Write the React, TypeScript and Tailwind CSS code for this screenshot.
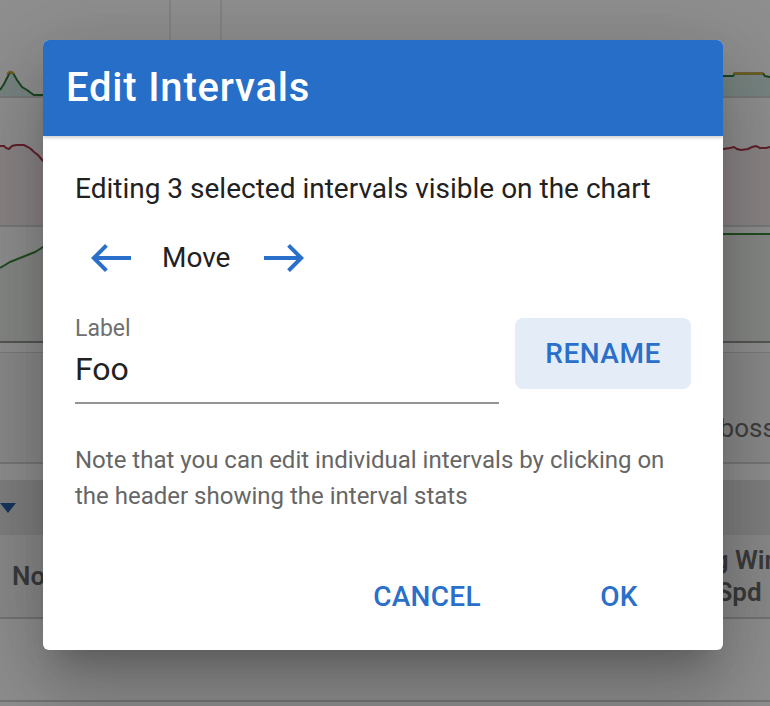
import React from 'react'

const BLUE = '#2a6fc9'

const greenTop =
  '0,90 4,84 8,76 10,72 13,73 17,80 22,87 27,90 31,93 34,95 120,95 170,94 221,95 400,95 560,94 700,93 715,84 723,76 733,76 735,73.5 763,73.5 765,76 770,77'
const redLine =
  '0,146 4,146 6,148 9,149 12,146 16,145 24,145 28,147 31,149 34,152 38,155 43,161 200,170 400,160 600,152 723,149 730,148 734,147 737,149 741,150 748,149 752,147 756,146 760,148 766,148 770,147'
const greenLow =
  '0,268 5,265 10,262 15,260 20,258 25,256 30,254 35,252 40,249 43,247 200,238 400,235 723,234 770,234'

function ArrowWest() {
  return (
    <svg width="48" height="48" viewBox="0 0 24 24" fill={BLUE}>
      <path d="M9 19l1.41-1.41L5.83 13H22v-2H5.83l4.59-4.59L9 5l-7 7 7 7z" />
    </svg>
  )
}

function ArrowEast() {
  return (
    <svg width="48" height="48" viewBox="0 0 24 24" fill={BLUE}>
      <path d="M15 5l-1.41 1.41L18.17 11H2v2h16.17l-4.59 4.59L15 19l7-7-7-7z" />
    </svg>
  )
}

function Charts() {
  return (
    <svg width="770" height="353" viewBox="0 0 770 353" className="block">
      <rect x="0" y="0" width="770" height="353" fill="#ffffff" />
      <line x1="170" y1="0" x2="170" y2="97" stroke="#e2e2e2" strokeWidth="1.5" />
      <line x1="221" y1="0" x2="221" y2="97" stroke="#e2e2e2" strokeWidth="1.5" />
      <polygon points={`${greenTop} 770,97 0,97`} fill="#c4e2dd" opacity="0.7" />
      <polyline points={greenTop} fill="none" stroke="#2f7d3c" strokeWidth="2" />
      <polyline points="7,74 10,71.5 13,72.5 14,74" fill="none" stroke="#d4a52a" strokeWidth="2" />
      <polyline points="733,73.5 763,73.5" fill="none" stroke="#d4a52a" strokeWidth="2" />
      <line x1="0" y1="97" x2="770" y2="97" stroke="#d6d6d6" strokeWidth="2" />

      <polygon points={`${redLine} 770,225 0,225`} fill="#f6eced" />
      <polyline points={redLine} fill="none" stroke="#b03a4e" strokeWidth="2" />
      <line x1="0" y1="226" x2="770" y2="226" stroke="#d8d8d8" strokeWidth="2" />

      <polygon points={`${greenLow} 770,341 0,341`} fill="#eff3ee" />
      <polyline points={greenLow} fill="none" stroke="#3e8a3e" strokeWidth="2" />
      <line x1="0" y1="342" x2="770" y2="342" stroke="#9a9a9a" strokeWidth="2" />
      <line x1="0" y1="353" x2="770" y2="353" stroke="#dcdcdc" strokeWidth="2" />
    </svg>
  )
}

function Background() {
  return (
    <div className="flex w-[770px] flex-col bg-white">
      <Charts />
      <div className="flex h-[109px] items-end bg-[#f6f6f6] pb-[14px]">
        <div className="w-[682px] shrink-0" />
        <span className="whitespace-nowrap text-[26px] text-[#707070]">Emboss</span>
      </div>
      <div className="h-[2px] bg-[#d4d4d4]" />
      <div className="h-[16px] bg-white" />
      <div className="flex h-[55px] items-center bg-[#e2e2e2]">
        <svg width="16" height="10" viewBox="0 0 16 10">
          <polygon points="0,0 16,0 8,10" fill="#2a5fa8" />
        </svg>
      </div>
      <div className="flex h-[82px] items-center justify-between bg-[#f7f7f7]">
        <span className="ml-[12px] text-[26px] font-semibold text-[#6a6a6a]">Notes</span>
        <span className="mr-[-34px] w-[130px] text-center text-[26px] font-semibold leading-[32px] text-[#6a6a6a]">
          Avg Wind Spd
        </span>
      </div>
      <div className="h-[2px] bg-[#cfcfcf]" />
      <div className="h-[81px] bg-white" />
      <div className="h-[2px] bg-[#d0d0d0]" />
      <div className="h-[20px] bg-white" />
    </div>
  )
}

export default function App() {
  return (
    <div className="relative h-[706px] w-[770px] overflow-hidden font-['Roboto',sans-serif]">
      <Background />
      <div className="absolute inset-0 bg-black/[0.44]" />

      <div className="absolute left-[43px] top-[40px] flex w-[680px] flex-col overflow-hidden rounded-[6px] bg-white shadow-[0_22px_30px_-14px_rgba(0,0,0,0.2),0_48px_76px_6px_rgba(0,0,0,0.14),0_18px_92px_16px_rgba(0,0,0,0.12)]">
        <div className="relative z-10 flex h-[96px] items-center bg-[#266ec8] pl-[23px] shadow-[0_2px_3px_rgba(0,0,0,0.18)]">
          <h2 className="text-[40px] font-medium leading-[40px] tracking-[0.8px] text-white">Edit Intervals</h2>
        </div>

        <div className="flex flex-col px-[32px] pb-[17px] pt-[32px]">
          <p className="text-[28px] leading-[42px] text-[#212121]">
            Editing 3 selected intervals visible on the chart
          </p>

          <div className="mt-[24px] flex h-[48px] items-center">
            <button type="button" className="ml-[12px] flex h-[48px] w-[48px] items-center justify-center">
              <ArrowWest />
            </button>
            <span className="ml-[27px] text-[28px] leading-[48px] text-[#212121]">Move</span>
            <button type="button" className="ml-[30px] flex h-[48px] w-[48px] items-center justify-center">
              <ArrowEast />
            </button>
          </div>

          <div className="mt-[36px] flex items-start gap-[16px]">
            <div className="flex flex-1 flex-col border-b-2 border-[#949494] pb-[13px]">
              <label className="text-[23px] leading-[22px] text-[#6f6f6f]">Label</label>
              <div className="mt-[9px] text-[32px] leading-[40px] text-[#212121]">Foo</div>
            </div>
            <button
              type="button"
              className="flex h-[71px] w-[176px] items-center justify-center rounded-[8px] bg-[#e4ecf8] text-[28px] font-medium tracking-[0.5px] text-[#2a6fc9]"
            >
              RENAME
            </button>
          </div>

          <p className="mt-[38px] text-[24px] leading-[36px] text-[#666666]">
            Note that you can edit individual intervals by clicking on the header showing the interval stats
          </p>

          <div className="mt-[47px] flex justify-end gap-[48px] pr-[8px]">
            <button
              type="button"
              className="flex h-[72px] w-[160px] items-center justify-center text-[28px] font-medium tracking-[0.3px] text-[#2a6fc9]"
            >
              CANCEL
            </button>
            <button
              type="button"
              className="flex h-[72px] w-[128px] items-center justify-center text-[28px] font-medium tracking-[0.3px] text-[#2a6fc9]"
            >
              OK
            </button>
          </div>
        </div>
      </div>
    </div>
  )
}
